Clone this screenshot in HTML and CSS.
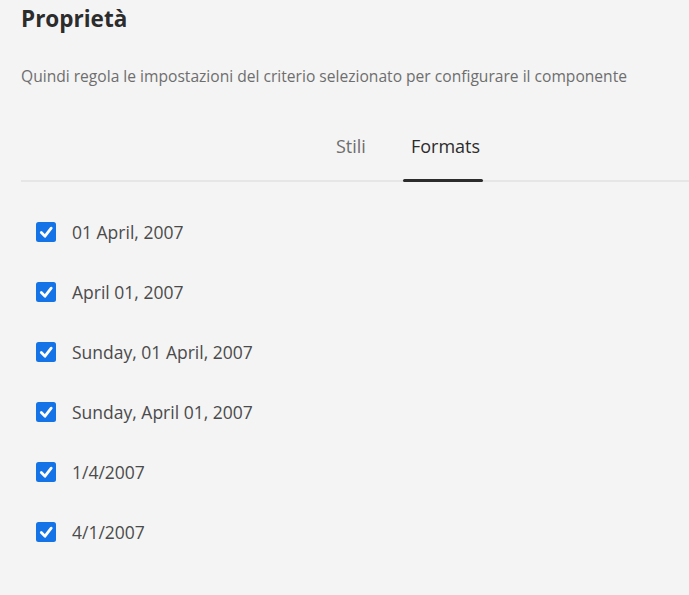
FILE: index.html
```html
<!DOCTYPE html>
<html lang="it">
<head>
<meta charset="utf-8">
<link rel="stylesheet" href="styles.css">
</head>
<body>
<div class="panel">
  <h1 class="title">Proprietà</h1>
  <p class="desc">Quindi regola le impostazioni del criterio selezionato per configurare il componente</p>
  <div class="tabs">
    <div class="tab">Stili</div>
    <div class="tab active">Formats</div>
  </div>
  <ul class="list">
    <li class="item"><span class="check"><svg viewBox="0 0 20 20" width="20" height="20"><path d="M5.3 10.6 L9 14.2 L15.2 6.2" fill="none" stroke="#fff" stroke-width="2.8" stroke-linecap="round" stroke-linejoin="round"/></svg></span><span class="label">01 April, 2007</span></li>
    <li class="item"><span class="check"><svg viewBox="0 0 20 20" width="20" height="20"><path d="M5.3 10.6 L9 14.2 L15.2 6.2" fill="none" stroke="#fff" stroke-width="2.8" stroke-linecap="round" stroke-linejoin="round"/></svg></span><span class="label">April 01, 2007</span></li>
    <li class="item"><span class="check"><svg viewBox="0 0 20 20" width="20" height="20"><path d="M5.3 10.6 L9 14.2 L15.2 6.2" fill="none" stroke="#fff" stroke-width="2.8" stroke-linecap="round" stroke-linejoin="round"/></svg></span><span class="label">Sunday, 01 April, 2007</span></li>
    <li class="item"><span class="check"><svg viewBox="0 0 20 20" width="20" height="20"><path d="M5.3 10.6 L9 14.2 L15.2 6.2" fill="none" stroke="#fff" stroke-width="2.8" stroke-linecap="round" stroke-linejoin="round"/></svg></span><span class="label">Sunday, April 01, 2007</span></li>
    <li class="item"><span class="check"><svg viewBox="0 0 20 20" width="20" height="20"><path d="M5.3 10.6 L9 14.2 L15.2 6.2" fill="none" stroke="#fff" stroke-width="2.8" stroke-linecap="round" stroke-linejoin="round"/></svg></span><span class="label">1/4/2007</span></li>
    <li class="item"><span class="check"><svg viewBox="0 0 20 20" width="20" height="20"><path d="M5.3 10.6 L9 14.2 L15.2 6.2" fill="none" stroke="#fff" stroke-width="2.8" stroke-linecap="round" stroke-linejoin="round"/></svg></span><span class="label">4/1/2007</span></li>
  </ul>
</div>
</body>
</html>
```
FILE: styles.css
```css
html, body {
  margin: 0;
  padding: 0;
  background: #f4f4f4;
}
body {
  font-family: "Open Sans", "Noto Sans", sans-serif;
  color: #2c2c2c;
  width: 689px;
  height: 595px;
  overflow: hidden;
}
.panel {
  padding-left: 21px;
}
.title {
  margin: 0;
  padding-top: 3px;
  font-size: 22.5px;
  line-height: 32px;
  font-weight: 700;
  color: #2c2c2c;
}
.desc {
  margin: 26px 0 0;
  font-size: 15.6px;
  line-height: 30px;
  color: #6e6e6e;
}
.tabs {
  margin-top: 36px;
  display: flex;
  gap: 34px;
  padding-left: 307px;
  border-bottom: 2px solid #e6e6e6;
  height: 55px;
  box-sizing: border-box;
}
.tab {
  position: relative;
  font-size: 18px;
  line-height: 24px;
  padding: 7px 3px 0 8px;
  color: #6e6e6e;
  height: 53px;
  box-sizing: border-box;
}
.tab.active {
  color: #2c2c2c;
}
.tab.active::after {
  content: "";
  position: absolute;
  left: 0;
  right: 0;
  bottom: -2px;
  height: 3px;
  border-radius: 2px;
  background: #2c2c2c;
}
.list {
  list-style: none;
  margin: 0;
  padding: 30px 0 0 15px;
}
.item {
  display: flex;
  align-items: center;
  height: 60px;
}
.item:first-child {
  margin-top: -10px;
}
.check {
  width: 20px;
  height: 20px;
  border-radius: 2.5px;
  background: #1473e6;
  display: flex;
}
.label {
  margin-left: 16px;
  font-size: 17.5px;
  color: #4b4b4b;
}
```
